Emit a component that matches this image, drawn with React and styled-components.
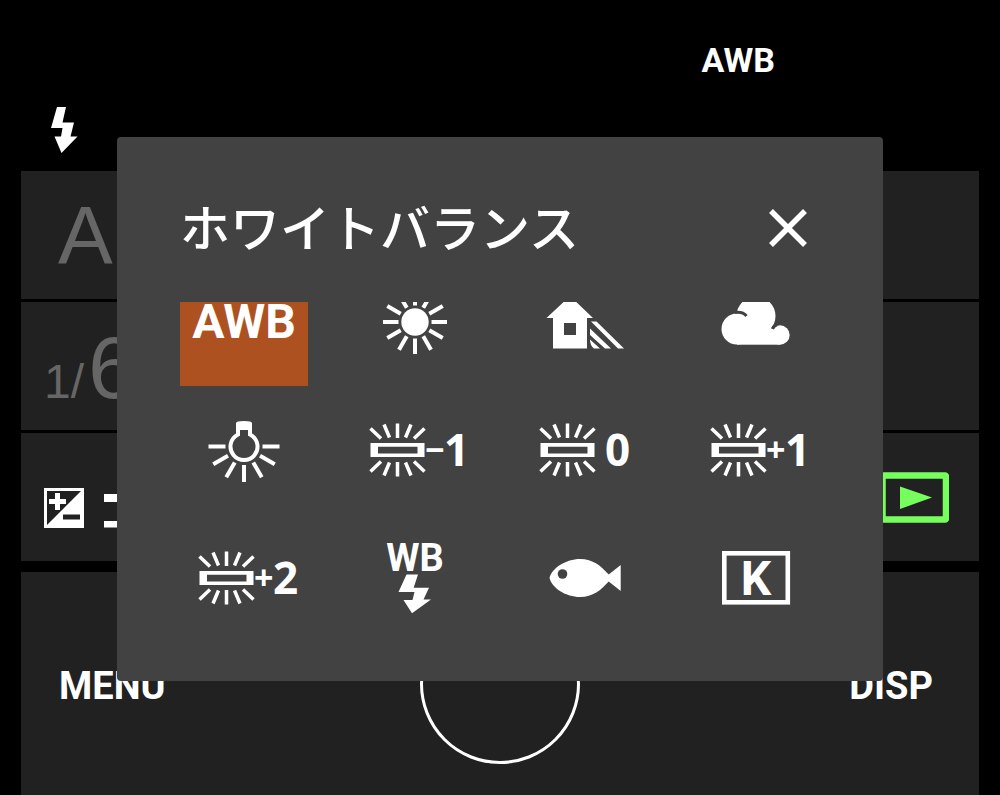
/* eslint-disable react/prop-types */
import React from 'react';
import styled, { createGlobalStyle } from 'styled-components';

const GlobalStyle = createGlobalStyle`
  * {
    box-sizing: border-box;
  }

  body {
    margin: 0;
    background: #000;
    color: #fff;
    font-family: "Liberation Sans", Arial, sans-serif;
  }

  button {
    padding: 0;
    border: none;
    background: none;
    color: inherit;
    font: inherit;
    cursor: pointer;
  }

  svg {
    display: block;
    flex: none;
  }
`;

const labelFont = 'Roboto, "Liberation Sans", sans-serif';

const Screen = styled.div`
  position: relative;
  display: flex;
  flex-direction: column;
  min-height: 100vh;
  padding: 0 21px;
`;

const StatusBar = styled.header`
  display: flex;
  flex-direction: column;
  gap: 27px;
  padding: 40px 0 18px;
`;

const StatusRow = styled.div`
  display: flex;
  justify-content: ${({ $end }) => ($end ? 'flex-end' : 'flex-start')};
  padding: ${({ $end }) => ($end ? '0 204px 0 0' : '0 0 0 30px')};
`;

const Label = styled.span`
  font-family: ${labelFont};
  font-size: ${({ $size }) => $size}px;
  font-weight: 700;
  line-height: 40px;
`;

const Settings = styled.main`
  display: flex;
  flex-direction: column;
  gap: 3px;
  margin-bottom: 11px;
`;

const SettingRow = styled.div`
  display: flex;
  align-items: center;
  justify-content: space-between;
  height: 128px;
  padding: 0 30px 0 23px;
  background: #212121;
  color: #666;
`;

const Mode = styled.span`
  padding-left: 14px;
  font-size: 82px;
  line-height: 128px;
`;

const Shutter = styled.span`
  padding-top: 18px;
  font-size: 88px;
  line-height: 110px;
`;

const ShutterPrefix = styled.span`
  margin-right: 4px;
  font-size: 48px;
`;

const Exposure = styled.div`
  display: flex;
  gap: 20px;
  padding-top: 22px;
`;

const Controls = styled.footer`
  display: grid;
  flex: 1;
  grid-template-columns: 1fr auto 1fr;
  align-items: center;
  min-height: 223px;
  padding: 0 38px;
  background: #212121;
`;

const ControlButton = styled.button`
  justify-self: ${({ $side }) => $side};
  padding-top: 4px;
  padding-right: ${({ $side }) => ($side === 'end' ? '8px' : '0')};
`;

const ShutterButton = styled.button`
  width: 160px;
  height: 160px;
  border: 3px solid #fff;
  border-radius: 50%;
`;

const Overlay = styled.div`
  position: absolute;
  inset: 0;
  padding: 137px 117px 0;
`;

const Dialog = styled.section`
  padding: 59px 63px 39px;
  border-radius: 4px;
  background: #424242;
`;

const DialogHeader = styled.div`
  display: flex;
  justify-content: space-between;
  height: 64px;
  margin-bottom: 42px;
`;

const Title = styled.h1`
  margin: 0;
  font-family: "Noto Sans CJK JP", sans-serif;
  font-size: 50px;
  font-weight: 500;
  line-height: 58px;
  white-space: nowrap;
`;

const CloseButton = styled.button`
  display: grid;
  place-items: center;
  width: 64px;
  height: 64px;
`;

// the list is scrolled a little, so its first row is cut off at the top
const ScrollArea = styled.div`
  overflow: hidden;
`;

const OptionGrid = styled.div`
  display: grid;
  grid-template-columns: repeat(4, 128px);
  justify-content: space-between;
  margin-top: -44px;
`;

const Option = styled.button`
  display: grid;
  place-items: center;
  width: 128px;
  height: 128px;
  background: ${({ $selected }) => ($selected ? '#ae5120' : 'transparent')};
`;

const OptionSvg = styled.svg`
  width: 128px;
  height: 128px;
  fill: #fff;
`;

const IconText = styled.text`
  font-family: ${labelFont};
  font-size: ${({ $size }) => $size}px;
  font-weight: 700;
  text-anchor: middle;
`;

const Digit = styled.tspan`
  font-family: "Noto Sans", sans-serif;
  font-size: 44px;
  font-weight: 700;
`;

const Sign = styled.tspan`
  font-family: "Noto Sans", sans-serif;
  font-size: 34px;
  font-weight: 700;
`;

const Rays = ({ angles, cx, cy, from, to }) => (
  <g stroke="#fff" strokeWidth="4">
    {angles.map((angle) => (
      <line
        key={angle}
        x1={cx + from}
        x2={cx + to}
        y1={cy}
        y2={cy}
        transform={`rotate(${angle} ${cx} ${cy})`}
      />
    ))}
  </g>
);

const Daylight = () => (
  <OptionSvg viewBox="0 0 128 128">
    <circle cx="64" cy="64" r="13.7" />
    <Rays angles={[0, 30, 60, 90, 120, 150, 180, 210, 240, 270, 300, 330]} cx={64} cy={64} from={16.5} to={32} />
  </OptionSvg>
);

const Shade = () => (
  <OptionSvg viewBox="0 0 128 128">
    <path fillRule="evenodd" d="M25.5 60 49 38 72 60H66V90.500H32V60ZM43 65V77H55V65Z" />
    <path d="M70 63.500H75.500L103 90.500H97ZM69 70.500 90 90.500H84L69 77ZM69 81.500 79 90.500H73Q69 87.500 69 81.500Z" />
  </OptionSvg>
);

const Cloudy = () => (
  <OptionSvg viewBox="0 0 128 128">
    <circle cx="45" cy="71" r="15.5" />
    <circle cx="64" cy="58" r="19.500" />
    <circle cx="88" cy="77" r="9.700" />
    <rect x="45" y="70" width="43" height="16.700" />
    <path d="M43 54.500Q51 53.500 54.500 58M85 66.500Q81.500 68 80.500 71" fill="none" stroke="#424242" strokeWidth="3" />
  </OptionSvg>
);

const Tungsten = () => (
  <OptionSvg viewBox="0 0 128 128">
    <path d="M58 43V48.500A13.500 13.500 0 1 0 70 48.500V43" fill="none" stroke="#fff" strokeWidth="4" />
    <path d="M56 37Q56 35 64 35Q72 35 72 37V44H56Z" />
    <Rays angles={[0, 30, 60, 90, 120, 150, 180]} cx={64} cy={60.5} from={18.5} to={35.5} />
  </OptionSvg>
);

const Fluorescent = ({ sign, digit, digitX }) => (
  <OptionSvg viewBox="0 0 128 128">
    <path fillRule="evenodd" d="M19.500 57H73.500V71H19.500ZM27 60.700V67.500H66.500V60.700Z" />
    <path
      d="M46.500 37.500V52M33 38.500 38.500 51.500M60 38.500 54.500 51.500M19.500 42.500 30 52.500M73.500 42.500 63 52.500M46.500 76V90.500M33 89.500 38.500 76.500M60 89.500 54.500 76.500M19.500 85.500 30 75.500M73.500 85.500 63 75.500"
      stroke="#fff"
      strokeWidth="3.500"
    />
    <text>
      {sign && <Sign x="74" y="76">{sign}</Sign>}
      <Digit x={digitX} y="80">{digit}</Digit>
    </text>
  </OptionSvg>
);

const FlashWb = () => (
  <OptionSvg viewBox="0 0 128 128">
    <IconText $size={38} x="64" y="57">WB</IconText>
    <path d="M55.500 60.500H67L62.700 73.700H78L72.500 85.500H80L61 99.300 52.500 86H61.500L63.500 78H47.500Z" />
  </OptionSvg>
);

const Underwater = () => (
  <OptionSvg viewBox="0 0 128 128">
    <path d="M28.500 64C31 54 45 45 59 45C72 45 80 52 87.700 60.500L99.700 51V77L87.700 67.500C80 76 72 83 59 83C45 83 31 74 28.500 64Z" />
    <circle cx="41.500" cy="60" r="4.800" fill="#424242" />
  </OptionSvg>
);

const Kelvin = () => (
  <OptionSvg viewBox="0 0 128 128">
    <rect x="32.300" y="39.300" width="63.500" height="49" fill="none" stroke="#fff" strokeWidth="4.600" />
    <IconText $size={48} x="64" y="81">K</IconText>
  </OptionSvg>
);

const FlashIcon = () => (
  <svg width="27" height="46" viewBox="0 0 27 46" fill="#fff">
    <path d="M6 0H15L11.500 15.500H23L19.500 29.500H26.500L10.500 46 3.500 29.500H10L11.500 21H0Z" />
  </svg>
);

const ExposureIcon = () => (
  <svg width="40" height="40" viewBox="0 0 40 40">
    <rect x="1.500" y="1.500" width="37" height="37" fill="none" stroke="#fff" strokeWidth="3" />
    <path d="M38 2V38H2Z" fill="#fff" />
    <path d="M5 13.500H22M13.500 5V22" stroke="#fff" strokeWidth="5" />
    <path d="M19 29H36" stroke="#212121" strokeWidth="5" />
  </svg>
);

const ScaleIcon = () => (
  <svg width="40" height="40" viewBox="0 0 40 40" fill="#fff">
    <path d="M0 6H40V14H0ZM0 33H40V39.500H0Z" />
  </svg>
);

const PlayIcon = () => (
  <svg width="70" height="51" viewBox="0 0 70 51">
    <rect x="3.500" y="3.500" width="63.500" height="44" rx="1" fill="none" stroke="#76ff5c" strokeWidth="6.500" />
    <path d="M21 14.500 53 25.500 21 37Z" fill="#76ff5c" />
  </svg>
);

const CloseIcon = () => (
  <svg width="40" height="40" viewBox="0 0 40 40">
    <path d="M3 3 37 37M37 3 3 37" stroke="#fff" strokeWidth="5.500" />
  </svg>
);

const options = [
  { name: 'オート', icon: <Label $size={48}>AWB</Label> },
  { name: '太陽光', icon: <Daylight /> },
  { name: '日陰', icon: <Shade /> },
  { name: '曇天', icon: <Cloudy /> },
  { name: '電球', icon: <Tungsten /> },
  { name: '蛍光灯 -1', icon: <Fluorescent sign="−" digit="1" digitX="93" /> },
  { name: '蛍光灯 0', icon: <Fluorescent digit="0" digitX="84" /> },
  { name: '蛍光灯 +1', icon: <Fluorescent sign="+" digit="1" digitX="93" /> },
  { name: '蛍光灯 +2', icon: <Fluorescent sign="+" digit="2" digitX="93" /> },
  { name: 'フラッシュ', icon: <FlashWb /> },
  { name: '水中オート', icon: <Underwater /> },
  { name: '色温度', icon: <Kelvin /> },
];

const App = () => {
  const [selected, setSelected] = React.useState(0);
  const [open, setOpen] = React.useState(true);

  return (
    <Screen>
      <GlobalStyle />
      <StatusBar>
        <StatusRow $end>
          <Label $size={34}>AWB</Label>
        </StatusRow>
        <StatusRow>
          <FlashIcon />
        </StatusRow>
      </StatusBar>
      <Settings>
        <SettingRow>
          <Mode>A</Mode>
        </SettingRow>
        <SettingRow>
          <Shutter>
            <ShutterPrefix>1/</ShutterPrefix>
            6
          </Shutter>
        </SettingRow>
        <SettingRow>
          <Exposure>
            <ExposureIcon />
            <ScaleIcon />
          </Exposure>
          <button type="button" aria-label="再生">
            <PlayIcon />
          </button>
        </SettingRow>
      </Settings>
      <Controls>
        <ControlButton type="button" $side="start">
          <Label $size={38}>MENU</Label>
        </ControlButton>
        <ShutterButton type="button" aria-label="シャッター" />
        <ControlButton type="button" $side="end">
          <Label $size={38}>DISP</Label>
        </ControlButton>
      </Controls>
      {open && (
        <Overlay>
          <Dialog role="dialog" aria-labelledby="dialog-title">
            <DialogHeader>
              <Title id="dialog-title">ホワイトバランス</Title>
              <CloseButton type="button" aria-label="閉じる" onClick={() => setOpen(false)}>
                <CloseIcon />
              </CloseButton>
            </DialogHeader>
            <ScrollArea>
              <OptionGrid>
                {options.map((option, index) => (
                  <Option
                    key={option.name}
                    type="button"
                    aria-label={option.name}
                    aria-pressed={index === selected}
                    $selected={index === selected}
                    onClick={() => setSelected(index)}
                  >
                    {option.icon}
                  </Option>
                ))}
              </OptionGrid>
            </ScrollArea>
          </Dialog>
        </Overlay>
      )}
    </Screen>
  );
};

export default App;
